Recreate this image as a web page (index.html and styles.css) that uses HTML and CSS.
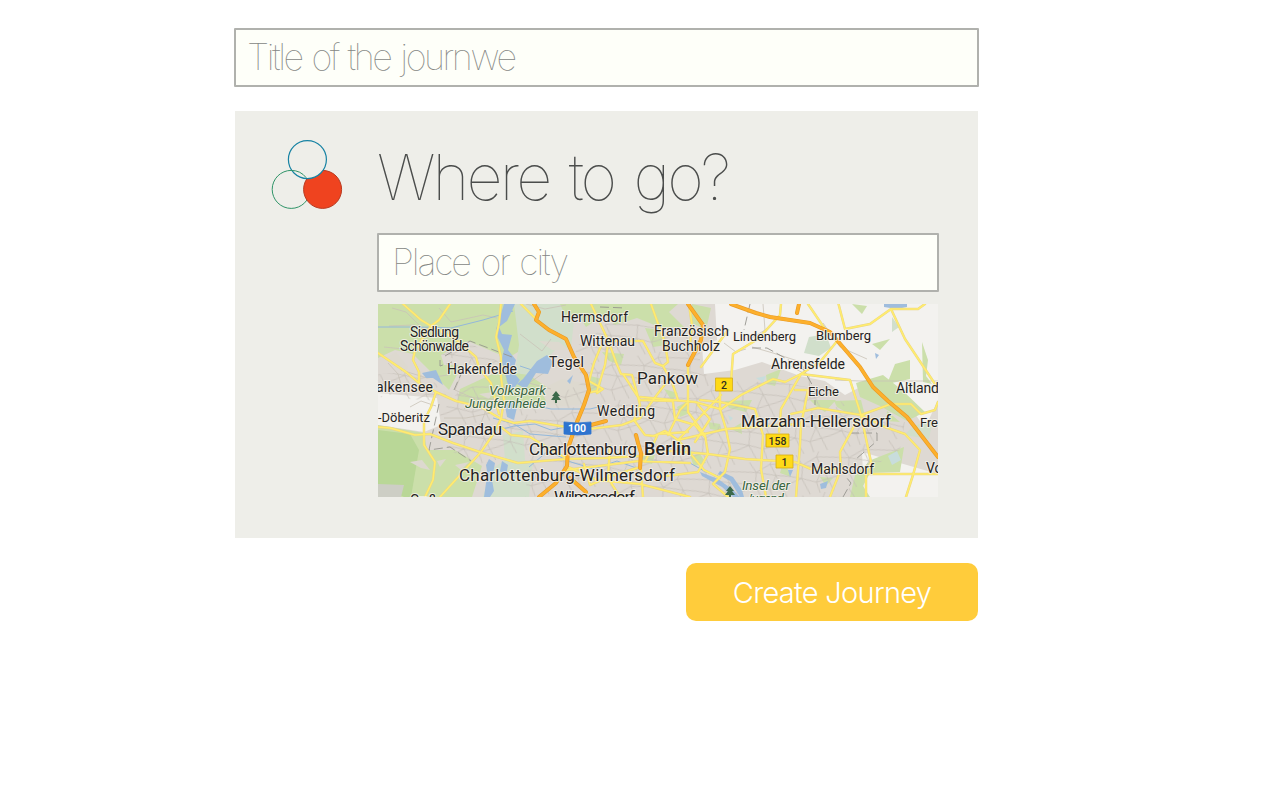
FILE: index.html
```html
<!DOCTYPE html>
<html lang="en">
<head>
<meta charset="utf-8">
<title>Create Journey</title>
<link rel="stylesheet" href="styles.css">
</head>
<body>
<main class="journey">
  <div class="field title-field"><span class="title-text">Title of the journwe</span></div>
  <section class="panel">
    <svg class="logo" width="72" height="72" viewBox="271 139 72 72" fill="none">
      <circle cx="291.2" cy="189.4" r="19" stroke="#2f9468"/>
      <circle cx="322.6" cy="189.4" r="19" fill="#ef431f" stroke="#b93a20"/>
      <circle cx="307.4" cy="159.6" r="19" fill="#eeeee9" stroke="#1682a3" stroke-width="1.2"/>
      <path d="M291.2 170.4A19 19 0 0 1 306.2 177.7" stroke="#2f9468"/>
    </svg>
    <div class="content">
      <h1 class="heading"><span class="heading-text">Where to go?</span></h1>
      <div class="field place-field"><span class="place-text">Place or city</span></div>
      <svg class="map" width="560" height="193" viewBox="378 304 560 193">
        <defs>
          <pattern id="streets" width="47" height="41" patternUnits="userSpaceOnUse" patternTransform="rotate(-9)">
            <path d="M0 8L15 11L30 5L47 8M0 27L12 24L26 30L47 27M10 0L15 11L12 24L18 41M33 0L30 5L34 17L26 30L28 41M15 11L34 17L47 20M0 20L12 24M34 17L42 41" class="street"/>
          </pattern>
          <path id="tree" d="M0-6L4-1H2L5 3H1V6H-1V3H-5L-2-1H-4Z" fill="#3c6a4b"/>
          <g id="main-roads">
            <path d="M403 304L421 320L431 326L439 320L450 304M431 326L426 333L415 350L413 360L419 372V383M431 326L454 338L476 357L479 368L491 383L499 414M378 353L406 372L419 383L436 392L456 401L481 407L501 419M501 304L499 323L496 337L501 357V377L504 400L501 419M521 304L539 322M436 392L431 407L424 421L424 445L435 462L433 480L425 497M378 427L390 428L415 435L430 434L453 443L480 452L518 463L566 459L606 458L640 456M481 452L460 475L440 497M501 419L494 433L481 452M501 419L514 423L530 421L566 427M501 427L511 435L530 437L555 452L566 458"/>
            <path d="M591 304L600 323L608 340L616 362L621 374L632 375L637 393L640 405M608 344L605 365L597 391L587 393M601 346L594 363L589 381L603 389L597 393M608 341H643L655 363L663 366L672 382L678 400M651 304L665 343L668 362L663 366M669 379L656 396L640 418M640 405L634 420L645 435L654 436M623 374L640 400L673 401M689 304L692 325L690 345"/>
            <path d="M781 304L780 315L758 339L733 354L731 382M720 392V409L726 429L730 449L725 472L713 484L728 497M808 304L825 329L838 340M838 302L845 329L870 324L891 309L918 309L925 304M891 309L905 339L935 384M838 340L820 362L801 374L781 409L779 432M801 374L850 380L861 415L871 462L866 474V497M801 374L785 382L773 379L741 395L720 410M861 415L818 408L791 414M861 415L891 404H911L921 414L935 410L938 402M858 419L840 452L841 469L830 497M861 415L885 427L905 434L920 450L913 475L906 497M866 474H938M640 456L658 450L708 454L745 459L795 462L811 469H840M678 440L726 429L798 424M700 400L720 402L755 409L763 435L761 469L766 497M795 390H808L801 425L800 445L796 497M640 397L695 402L720 409M688 365V412L705 435L708 454L698 472L658 477M673 402L675 419L695 425L705 437M678 440L721 395M668 435L680 410L688 402M698 405L710 419L695 442M728 330L701 367"/>
            <path d="M589 429L622 425L640 418M566 470L639 461L690 463M566 466L597 480L640 484L690 497M610 446L608 478L620 497M640 456L643 497M658 434L645 462M658 434L688 432M654 436L665 431L678 440L690 453L704 470L720 478M584 464L590 485L611 476L637 468"/>
          </g>
          <g id="motorways"><path d="M534 304L539 312L536 320L549 330L566 339L574 357L586 375L589 390L584 405L577 422L568 448L567 466L556 483L539 497M568 432L591 425L606 421M636 435L638 443L641 453L640 468M688 304L703 325L701 340L688 365M731 304L756 313L770 317L810 323L830 332L860 367L873 387L888 401L907 417L938 457M799 304L797 313M570 478L586 492"/></g>
        </defs>
        <path class="urban" d="M378 304H938V497H378Z"/>
        <path class="open" d="M715 304H938V400L925 428L905 400L870 382L845 395L825 381L800 376L762 362L735 370L704 374L702 345L717 340ZM862 452L938 474V497H864ZM378 393L437 398L441 425L424 432L378 425Z"/>
        <path class="green" d="M378 304H533L540 322L518 352L508 358L468 341L441 355L444 365L462 365L449 390L424 365L413 354L395 350L378 358Z"/>
        <path class="wood" d="M514 304H562L574 320L571 348L555 350L528 380L514 378L519 345Z"/>
        <path class="green" d="M378 425L424 433L427 450L455 450L482 466L472 497H378ZM560 304H678L669 312L684 327L662 328L637 318L615 325L604 315L586 327L579 316L567 319Z"/>
        <path class="forest" d="M378 430L410 434L419 450L411 497H404L378 484Z"/>
        <path class="bare" d="M378 484L404 485L401 497H378Z"/>
        <path class="wood" d="M503 435L523 431L525 460L533 462L529 497H483L492 469L505 460Z"/>
        <path class="green" d="M460 389L499 371L529 375L551 390L545 402L520 409L496 398L478 406L457 402ZM692 304L711 308L706 330L692 323ZM645 328L663 330L667 345L653 347ZM602 352L624 354L621 365L609 361ZM590 376L602 379L599 392L587 391ZM664 389L678 393L672 401ZM677 407L686 402L690 413L680 417ZM708 422L720 424L722 431L710 429ZM641 454L655 455L652 464L642 462ZM690 456L700 454L706 463L694 466ZM725 401L752 400L746 412L729 408ZM766 375L781 369L775 386L767 384ZM834 401L861 400L865 416L849 414L837 407ZM852 304L867 306L862 314ZM872 344L890 339L880 350ZM895 364L910 360L910 379L887 384ZM856 383L883 375L902 390L925 412L907 421L880 406L860 397ZM922 342L928 360L926 376L932 384L923 382ZM887 411L900 422L886 421ZM871 460L904 447L900 472L870 473L863 486L870 497H850L855 475ZM820 477L833 478L826 486ZM810 400L836 400L825 412L817 407ZM784 460L791 477L780 473ZM731 429L741 423L742 434Z"/>
        <path class="wood" d="M809 337L826 334L831 348L819 356L804 353ZM892 317L899 327L892 332ZM914 426L933 419L929 439L904 435Z"/>
        <path class="lawn" d="M443 391L453 393L450 401ZM479 394L493 392L489 399ZM410 462L422 460L430 470L421 468ZM437 461L446 459L440 467ZM455 465L469 462L461 470ZM386 358L396 352L408 367L405 374ZM540 390L562 379L585 383L584 405L560 406L548 404ZM539 341L559 342L569 350L552 350Z"/>
        <path class="tiles" d="M441 355L468 341L500 363L505 380L460 389L440 415L448 450L480 465L530 449L525 497H855L860 475L900 450L905 422L859 417L829 391L785 383L720 380L700 372L700 345L685 332L610 320L594 335L575 347L582 383L540 404L510 408V375ZM378 374L416 372L449 391L440 401L378 397Z"/>
        <path class="streams" d="M392 308L406 312L423 329M439 308L451 322L483 315L497 318M389 326L414 325L432 331M384 347L413 350L437 346L452 355M388 363L398 374L403 391M401 370L427 378L448 375M410 407L421 401L436 406M461 375L455 390L475 399L464 409M444 418L466 418L491 413M488 405L481 423L465 440M526 304L545 309L566 305M520 334L542 351L551 339M545 372L529 383L551 389M752 347L773 353L801 362L809 380M790 366L809 376L810 399M835 380L860 381L938 381M823 323L840 347L867 359M763 304L765 330L750 339M724 343L736 352L746 349"/>
        <path class="water-line" d="M378 327L418 327L451 328L483 320L513 311M520 366L535 371L548 365M525 403L551 409L590 409L602 406M493 418L514 424L530 434L566 437M499 430L514 426L535 424L551 430L566 427M529 467L548 451L571 462L594 469L617 461L639 469M690 463L706 472L718 476"/>
        <path class="lake" d="M504 304H515L507 321L499 327L502 334L512 335L508 350L516 360L513 372L520 380L512 391L507 382L505 370L501 361L504 350L498 338L496 329L500 317ZM523 379L537 361L547 355L553 362L548 374L536 373L526 389L517 384ZM511 400L518 403L514 420L507 417L505 406ZM489 459L495 463L492 480L494 491L490 497H484L486 483L488 477L486 465ZM502 461L508 465L506 476L500 471ZM422 373L436 370L443 385L433 378L426 378ZM567 381L573 375L570 384ZM884 304H907V307L897 309L884 307ZM875 353L879 355L876 359ZM700 472L718 479L732 489L740 497H733L722 487L702 476ZM720 471L733 477L742 490L744 497H740L730 481L718 474ZM820 484L828 481L826 488L821 489ZM788 470L793 470L790 477Z"/>
        <path class="lake pale" d="M888 456L897 451L901 460L892 465ZM728 415L733 418L730 421ZM756 378L766 376L763 383Z"/>
        <g class="borders"><path d="M445 356L470 341L512 357M440 360V366L452 362M454 390L461 374M439 404L429 450L450 447L471 461M600 307L626 308M750 304L744 330M752 348L767 348L785 358L804 370L815 390V405M850 433H877V441L856 459M843 497L851 483L846 477"/></g>
        <use href="#main-roads" class="road road-edge"/>
        <use href="#main-roads" class="road yellow"/>
        <use href="#motorways" class="road orange-edge"/>
        <use href="#motorways" class="road orange"/>
        <use href="#tree" x="556" y="397"/><use href="#tree" x="730" y="492"/>
        <g class="shields"><path d="M715.5 378H732.5V391H715.5ZM766 434H789V447H766ZM776 455H793V468H776Z"/><path class="blue" d="M564 422Q577 424 591 422V434Q577 436 564 434Z"/></g>
        <g class="shield-text"><text x="724" y="388.5">2</text><text x="777.5" y="444.5">158</text><text x="784.5" y="465.5">1</text><text x="577" y="432.3" class="white">100</text></g>
        <g class="labels">
          <text x="410" y="337" textLength="49">Siedlung</text><text x="400" y="351" textLength="69">Schönwalde</text>
          <text x="447" y="374" textLength="70">Hakenfelde</text><text x="376" y="391.5" textLength="57">alkensee</text>
          <text x="378" y="422" textLength="52" class="small">-Döberitz</text><text x="438" y="434.5" textLength="64" class="large">Spandau</text>
          <text x="561" y="321.5" textLength="67">Hermsdorf</text><text x="580" y="346" textLength="55">Wittenau</text>
          <text x="549" y="367" textLength="35">Tegel</text><text x="654" y="336" textLength="75">Französisch</text><text x="662" y="351" textLength="58">Buchholz</text>
          <text x="733" y="340.5" textLength="63" class="small">Lindenberg</text><text x="816" y="340" textLength="55" class="small">Blumberg</text><text x="771" y="368.5" textLength="74">Ahrensfelde</text>
          <text x="808" y="395.5" textLength="31" class="small">Eiche</text><text x="896" y="392.5" textLength="43">Altland</text><text x="920" y="426.5" textLength="18" class="small">Fre</text>
          <text x="637" y="384" textLength="61" class="large">Pankow</text><text x="597" y="415.5" textLength="58">Wedding</text>
          <text x="741" y="426.5" textLength="150" class="large">Marzahn-Hellersdorf</text><text x="811" y="474" textLength="63">Mahlsdorf</text><text x="926" y="473">Vo</text>
          <text x="529" y="455" textLength="108" class="large">Charlottenburg</text><text x="644" y="455" textLength="47" class="capital">Berlin</text>
          <text x="459" y="480.5" textLength="216" class="large">Charlottenburg-Wilmersdorf</text><text x="554" y="502.5" textLength="81" class="large">Wilmersdorf</text>
          <text x="410" y="505" textLength="27">Groß</text>
          <g class="parks"><text x="489" y="394.5" textLength="57">Volkspark</text><text x="465" y="408" textLength="81">Jungfernheide</text><text x="742" y="489.5" textLength="48">Insel der</text><text x="745" y="502.5" textLength="39">Jugend</text></g>
        </g>
      </svg>
    </div>
  </section>
  <button class="create"><span class="create-text">Create Journey</span></button>
</main>
</body>
</html>
```
FILE: styles.css
```css
* { box-sizing: border-box; }
body { margin: 0; background: #fff; font-family: "Inter", "Liberation Sans", sans-serif; }
.journey { width: 745px; margin: 28px 0 0 234px; display: flex; flex-direction: column; }
.field { height: 59px; border: 2px solid #b0b1ad; border-radius: 1px; padding-bottom: 2px; background: #fefff9; display: flex; align-items: center; white-space: nowrap; color: #858784; font-size: 36px; font-weight: 100; }
.title-field { padding-left: 11px; }
.title-text { letter-spacing: -2.45px; word-spacing: 2px; }
.panel { width: 743px; height: 427px; margin: 24px 0 0 1px; padding: 28px 38px 0 36px; background: #eeeee9; display: flex; gap: 35px; align-items: flex-start; }
.logo { flex: none; }
.content { width: 562px; display: flex; flex-direction: column; }
.heading { margin: 0; height: 94px; font-size: 63px; font-weight: 100; line-height: 76px; white-space: nowrap; color: #4b4d4c; }
.heading-text { margin-left: -1px; letter-spacing: -2.9px; word-spacing: 4.5px; }
.place-field { width: 562px; margin-left: -1px; padding-left: 13px; }
.place-text { letter-spacing: -2.1px; word-spacing: 2.5px; }
.map { display: block; width: 560px; height: 193px; margin-top: 12px; overflow: hidden; }
.create { width: 292px; height: 58px; margin: 25px 1px 0 0; align-self: flex-end; border: 0; border-radius: 10px; padding: 0; background: #ffcc3b; color: #fff; font: 300 29px "Inter", sans-serif; white-space: nowrap; }
.create-text { letter-spacing: -.7px; }
.urban { fill: #ded9d3; }
.open { fill: #f3f2ef; }
.green { fill: #cbdfaa; }
.wood { fill: #d1dfcb; }
.forest { fill: #b9d797; }
.bare { fill: #cdcec5; }
.lawn { fill: #ddd9cf; }
.tiles { fill: url(#streets); }
.street { fill: none; stroke: #c4beb8; stroke-width: .7; }
.streams { fill: none; stroke: #c9c3b7; stroke-width: .8; }
.water-line { fill: none; stroke: #94b8da; stroke-width: 1; }
.lake { fill: #9fbddd; }
.lake.pale { fill: #c8dddc; }
.borders { fill: none; stroke: #96958f; stroke-width: .9; stroke-dasharray: 9 4; }
.road { fill: none; stroke-linejoin: round; stroke-linecap: round; }
.road-edge { stroke: #e9d583; stroke-width: 2.5; }
.yellow { stroke: #ffec6e; stroke-width: 1.6; }
.orange-edge { stroke: #e79a26; stroke-width: 4; }
.orange { stroke: #fdb02c; stroke-width: 2.8; }
.shields path { fill: #ffda16; stroke: #d5ac16; stroke-width: .8; }
.shields .blue { fill: #2e74cf; stroke: #2e74cf; }
.shield-text { font: 500 10.5px Roboto, sans-serif; text-anchor: middle; fill: #302f20; }
.shield-text .white { fill: #fff; font-weight: 700; }
.labels { font: 400 14px Roboto, sans-serif; fill: #25231f; stroke: #f6f3eb; stroke-width: 2; stroke-opacity: .8; paint-order: stroke; stroke-linejoin: round; }
.labels .small { font-size: 13px; }
.labels .large { font-size: 17px; }
.labels .capital { font-size: 18px; font-weight: 500; }
.parks { font-size: 13.5px; font-style: italic; fill: #386541; }
```
